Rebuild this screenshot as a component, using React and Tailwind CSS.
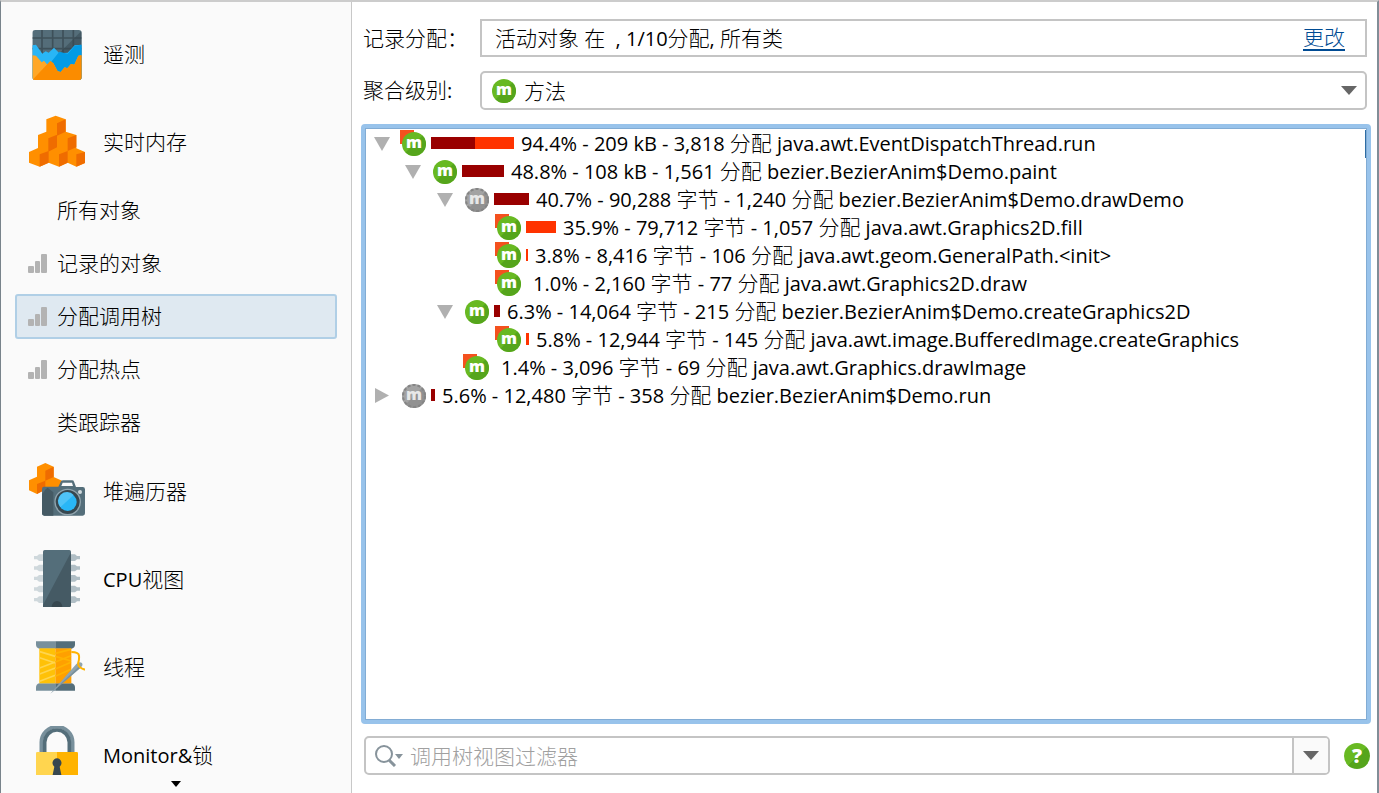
import React, { useState } from "react";

// Wraps runs of Chinese characters so that they get their own size and weight.
const Mixed = ({ children }) =>
  children
    .split(/([\u3000-\u9fff\uff00-\uffef]+)/)
    .filter(Boolean)
    .map((part, i) =>
      /[\u3000-\u9fff\uff00-\uffef]/.test(part) ? (
        <span key={i} className="text-[21px] font-light">
          {part}
        </span>
      ) : (
        part
      )
    );

const TelemetryIcon = () => (
  <svg viewBox="87 75 168 174" className="w-14 shrink-0" aria-hidden="true">
    <clipPath id="telemetry">
      <rect x="97" y="90" width="148" height="150" rx="9" />
    </clipPath>
    <g clipPath="url(#telemetry)">
      <rect x="97" y="90" width="148" height="150" fill="#546e7a" />
      <path d="M245 92L130 207V240H245Z" fill="#455a64" />
      <path
        d="M126 90V175M158 90V175M189 90V175M220 90V175M97 114H245M97 146H245"
        stroke="#37474f"
        strokeWidth="5"
        opacity=".75"
      />
      <path
        d="M97 136L108 134L127 161L137 154L146 158L162 143L178 160L203 158L224 136L245 134V240H97Z"
        fill="#29b6f6"
      />
      <path d="M178 155L203 161L224 137L245 134V240H110Z" fill="#039be5" />
      <path
        d="M97 166L108 167L125 187L132 182L142 194L151 183L160 190L173 214L182 216L194 202L202 205L213 192L223 194L235 167L245 166V240H97Z"
        fill="#ffa726"
      />
      <path
        d="M151 183L160 190L173 214L182 216L194 202L202 205L213 192L223 194L235 167L245 166V240H97L102 235Z"
        fill="#fb8c00"
      />
    </g>
  </svg>
);

const MemoryIcon = () => (
  <svg viewBox="87 339 168 174" className="w-14 shrink-0" aria-hidden="true">
    <path
      d="M139 358L167 347L197 358V395L229 405V445L255 456V489L229 500L203 488L177 500L146 488L119 500L87 488V456L114 444V405L139 395Z"
      fill="#ff8f00"
    />
    <path
      d="M171 370L197 358V395L171 407ZM145 415L171 404V442L145 455ZM203 415L229 405V442L203 453ZM119 463L146 453V488L119 500ZM177 463L203 453V488L177 500ZM229 463L255 456V489L229 500Z"
      fill="#ef6c00"
    />
  </svg>
);

const HeapIcon = () => (
  <svg viewBox="87 69 168 174" className="w-14 shrink-0" aria-hidden="true">
    <path
      d="M111 83L136 72L161 83V114L186 125V145L136 150L111 165L87 154V124L111 113Z"
      fill="#ff8f00"
    />
    <path
      d="M136 95L161 83V114L136 125ZM111 135L136 125V152L111 165Z"
      fill="#ef6c00"
    />
    <path
      d="M132 143H175L183 127Q185 124 190 124H216Q221 124 222 128L228 144H248Q255 144 255 151V223Q255 230 248 230H133Q126 230 126 223V150Q126 143 132 143Z"
      fill="#546e7a"
    />
    <path
      d="M132 158Q135 150 143 146L160 160V230H133Q126 230 126 223V165Z"
      fill="#455a64"
    />
    <path d="M188 131H216L219 141H184Z" fill="#fafafa" />
    <circle cx="203" cy="189" r="38" fill="#37474f" />
    <circle
      cx="203"
      cy="189"
      r="38"
      fill="none"
      stroke="#90a4ae"
      strokeWidth="4"
    />
    <circle cx="203" cy="189" r="27" fill="#29b6f6" />
    <path d="M181 205A27 27 0 0 1 221 168Z" fill="#4fc3f7" />
    <circle cx="240" cy="159" r="6" fill="#cfd8dc" />
  </svg>
);

const CpuIcon = () => (
  <svg viewBox="87 333 168 174" className="w-14 shrink-0" aria-hidden="true">
    {[356, 387, 418, 450, 482].map((y) => (
      <g key={y}>
        <path
          d={`M102 ${y - 5}H111L117 ${y - 10}H130V${y + 10}H117L111 ${y + 5}H102Z`}
          fill="#cfd8dc"
        />
        <path
          d={`M240 ${y - 5}H231L225 ${y - 10}H212V${y + 10}H225L231 ${y + 5}H240Z`}
          fill="#b0bec5"
        />
      </g>
    ))}
    <rect x="129" y="333" width="84" height="171" rx="5" fill="#546e7a" />
    <path d="M213 340V499Q213 504 208 504H129V498Z" fill="#455a64" />
    <path d="M155 504A16 18 0 0 1 187 504Z" fill="#37474f" />
  </svg>
);

const ThreadIcon = () => (
  <svg viewBox="87 57 168 174" className="w-14 shrink-0" aria-hidden="true">
    <path d="M108 67H166V89H118Q108 87 108 76Z" fill="#78909c" />
    <path d="M166 67H225V76Q225 87 215 89H166Z" fill="#546e7a" />
    <path d="M108 215H166V193H118Q108 195 108 206Z" fill="#78909c" />
    <path d="M166 215H225V206Q225 195 215 193H166Z" fill="#546e7a" />
    <rect x="118" y="88" width="48" height="105" fill="#ffc107" />
    <rect x="166" y="88" width="48" height="105" fill="#ffa000" />
    <path
      d="M119 98L166 112M119 116L166 132M119 147L166 129M119 165L166 147M119 187L166 169"
      stroke="#ffd54f"
      strokeWidth="5"
    />
    <path
      d="M166 103L213 91M166 112L213 126M166 129L213 110M166 150L213 130M166 172L213 151"
      stroke="#ffb300"
      strokeWidth="5"
    />
    <path d="M151 224L229 135Q238 126 246 132Q251 139 240 148Z" fill="#90a4ae" />
    <path d="M151 224L238 141L244 144Z" fill="#78909c" />
    <path
      d="M214 99Q236 99 237 110Q238 122 235 130Q231 145 255 152"
      fill="none"
      stroke="#ffb300"
      strokeWidth="6"
    />
  </svg>
);

const LockIcon = () => (
  <svg viewBox="87 321 168 174" className="w-14 shrink-0" aria-hidden="true">
    <path
      d="M124 404V370A47 47 0 0 1 218 370V404"
      fill="none"
      stroke="#78909c"
      strokeWidth="11"
    />
    <path
      d="M134 404V370A37 37 0 0 1 208 370V404"
      fill="none"
      stroke="#546e7a"
      strokeWidth="11"
    />
    <path d="M112 399H171V492H108V403Q108 399 112 399Z" fill="#ffd54f" />
    <path d="M171 399H230Q234 399 234 403V492H171Z" fill="#ffb300" />
    <path
      d="M171 418A14 14 0 0 1 179 443L185 472H157L163 443A14 14 0 0 1 171 418Z"
      fill="#37474f"
    />
  </svg>
);

const SignalIcon = () => (
  <svg
    viewBox="0 0 19 19"
    className="w-[19px] shrink-0"
    fill="#b3b3b3"
    aria-hidden="true"
  >
    <rect x="0" y="12" width="6" height="7" rx="1" />
    <rect x="7" y="7" width="5" height="12" rx="1" />
    <rect x="13" y="0" width="6" height="19" rx="1" />
  </svg>
);

const MethodIcon = ({ gray = false, hot = false }) => {
  const [top, bottom] = gray ? ["#a3a3a3", "#919191"] : ["#68b922", "#55a51c"];
  return (
    <svg viewBox="0 0 26 26" className="w-[26px] shrink-0" aria-hidden="true">
      {hot && <rect width="14" height="14" fill="#f4511e" />}
      <circle cx="14" cy="14" r="12" fill={top} />
      <path d="M22.5 5.5A12 12 0 0 1 5.5 22.5Z" fill={bottom} />
      {gray && (
        <circle
          cx="14"
          cy="14"
          r="11"
          fill="none"
          stroke="#858585"
          strokeWidth="2"
          strokeDasharray="3 2"
        />
      )}
      <text
        x="14"
        y="18"
        textAnchor="middle"
        fontFamily="Open Sans, sans-serif"
        fontWeight="800"
        fontSize="16"
        fill={gray ? "#e8e8e8" : "#ffffff"}
      >
        m
      </text>
    </svg>
  );
};

const SearchIcon = () => (
  <svg
    viewBox="0 0 28 22"
    className="w-7 shrink-0"
    fill="none"
    aria-hidden="true"
  >
    <circle cx="9" cy="9" r="8" stroke="#87939b" strokeWidth="2" />
    <path d="M14 15L20 21" stroke="#87939b" strokeWidth="3" />
    <path d="M20 9H28L24 14Z" fill="#87939b" />
  </svg>
);

const DownArrow = () => (
  <svg viewBox="0 0 16 9" className="w-4" fill="#666666" aria-hidden="true">
    <path d="M0 0H16L8 9Z" />
  </svg>
);

const telemetryItems = [
  { label: "遥测", icon: TelemetryIcon },
  { label: "实时内存", icon: MemoryIcon },
];

const memoryViews = [
  { label: "所有对象" },
  { label: "记录的对象", signal: true },
  { label: "分配调用树", signal: true },
  { label: "分配热点", signal: true },
  { label: "类跟踪器" },
];

const otherItems = [
  { label: "堆遍历器", icon: HeapIcon },
  { label: "CPU视图", icon: CpuIcon },
  { label: "线程", icon: ThreadIcon },
  { label: "Monitor&锁", icon: LockIcon },
];

// own = allocations of the node itself (bright), inherited = of its children (dark)
const rows = [
  { level: 0, open: true, hot: true, inherited: 44, own: 39, text: "94.4% - 209 kB - 3,818 分配 java.awt.EventDispatchThread.run" },
  { level: 1, open: true, inherited: 42, text: "48.8% - 108 kB - 1,561 分配 bezier.BezierAnim$Demo.paint" },
  { level: 2, open: true, gray: true, inherited: 35, text: "40.7% - 90,288 字节 - 1,240 分配 bezier.BezierAnim$Demo.drawDemo" },
  { level: 3, hot: true, own: 30, text: "35.9% - 79,712 字节 - 1,057 分配 java.awt.Graphics2D.fill" },
  { level: 3, hot: true, own: 2, text: "3.8% - 8,416 字节 - 106 分配 java.awt.geom.GeneralPath.<init>" },
  { level: 3, hot: true, text: "1.0% - 2,160 字节 - 77 分配 java.awt.Graphics2D.draw" },
  { level: 2, open: true, inherited: 6, text: "6.3% - 14,064 字节 - 215 分配 bezier.BezierAnim$Demo.createGraphics2D" },
  { level: 3, hot: true, own: 3, text: "5.8% - 12,944 字节 - 145 分配 java.awt.image.BufferedImage.createGraphics" },
  { level: 2, hot: true, text: "1.4% - 3,096 字节 - 69 分配 java.awt.Graphics.drawImage" },
  { level: 0, open: false, gray: true, inherited: 4, text: "5.6% - 12,480 字节 - 358 分配 bezier.BezierAnim$Demo.run" },
];

const NavItem = ({ label, icon: Icon }) => (
  <button
    type="button"
    className="flex h-[88px] w-full shrink-0 items-center gap-[18px] pl-7 text-left"
  >
    <Icon />
    <span>
      <Mixed>{label}</Mixed>
    </span>
  </button>
);

const SubItem = ({ label, signal, selected, onClick }) => (
  <button
    type="button"
    onClick={onClick}
    className={`flex h-[45px] shrink-0 items-center gap-2 rounded-[3px] border-2 pl-[11px] text-left ${
      selected ? "border-[#b0cfe6] bg-[#dfe9f1]" : "border-transparent"
    }`}
  >
    <span className="w-[21px]">{signal && <SignalIcon />}</span>
    <span>
      <Mixed>{label}</Mixed>
    </span>
  </button>
);

const TreeRow = ({ level, open, hot, gray, inherited = 0, own = 0, text }) => (
  <li
    className="flex h-7 items-center whitespace-nowrap"
    style={{ paddingLeft: 8 + Math.floor(level * 31.7) }}
  >
    <span className="w-[26px] shrink-0">
      {open !== undefined && (
        <button
          type="button"
          aria-label={open ? "折叠" : "展开"}
          className="block"
        >
          <svg viewBox="0 0 16 16" className="w-4" fill="#b0b0b0">
            <path d={open ? "M0 2H16L8 16Z" : "M1 1V16L15 8.5Z"} />
          </svg>
        </button>
      )}
    </span>
    <MethodIcon gray={gray} hot={hot} />
    <span className="mr-[7px] ml-[5px] flex h-3 shrink-0">
      <span className="bg-[#990000]" style={{ width: inherited }} />
      <span className="bg-[#ff3300]" style={{ width: own }} />
    </span>
    <span>
      <Mixed>{text}</Mixed>
    </span>
  </li>
);

const App = () => {
  const [view, setView] = useState("分配调用树");
  const [filter, setFilter] = useState("");

  return (
    <div className="flex h-screen border-t-2 border-r-2 border-l border-t-[#cccccc] border-r-[#818d97] border-l-[#78838b] bg-white font-['Open_Sans','Noto_Sans_CJK_SC',sans-serif] text-[20px] leading-7 text-black">
      {/* Sidebar */}
      <aside className="flex w-[351px] shrink-0 flex-col border-r border-[#c8c8c8] bg-[#fafafa]">
        <nav className="flex min-h-0 flex-1 flex-col overflow-hidden pt-2">
          {telemetryItems.map((item) => (
            <NavItem key={item.label} {...item} />
          ))}
          <div className="flex shrink-0 flex-col gap-2 px-[14px] pt-[2px] pb-[2px]">
            {memoryViews.map((item) => (
              <SubItem
                key={item.label}
                {...item}
                selected={item.label === view}
                onClick={() => setView(item.label)}
              />
            ))}
          </div>
          {otherItems.map((item) => (
            <NavItem key={item.label} {...item} />
          ))}
        </nav>
        <button
          type="button"
          aria-label="向下滚动"
          className="flex h-[18px] shrink-0 items-center justify-center"
        >
          <svg viewBox="0 0 10 6" className="w-[10px]">
            <path d="M0 0H10L5 6Z" />
          </svg>
        </button>
      </aside>

      {/* Call tree view */}
      <main className="flex min-w-0 flex-1 flex-col pt-[17px] pr-[6px] pb-[18px] pl-[9px]">
        <div className="mr-1 ml-[2px] flex items-center">
          <span className="w-[117px] shrink-0">
            <Mixed>记录分配：</Mixed>
          </span>
          <div className="flex h-[38px] flex-1 items-center justify-between border-2 border-[#c4c4c4] pr-5 pl-[13px]">
            <span className="whitespace-pre">
              <Mixed>{"活动对象 在  , 1/10分配, 所有类"}</Mixed>
            </span>
            <a
              href="#change"
              className="border-b-2 border-[#004b93] leading-[23px] text-[#004b93]"
            >
              <Mixed>更改</Mixed>
            </a>
          </div>
        </div>

        <div className="mt-[14px] mr-1 ml-[2px] flex items-center">
          <label htmlFor="level" className="w-[117px] shrink-0">
            <Mixed>聚合级别:</Mixed>
          </label>
          <div className="relative flex-1">
            <select
              id="level"
              className="block h-[39px] w-full appearance-none rounded-[5px] border-2 border-[#c4c4c4] bg-white pl-[42px] text-[21px] leading-7 font-light"
            >
              <option>方法</option>
            </select>
            <span className="pointer-events-none absolute inset-y-0 left-[10px] flex items-center pb-[2px]">
              <MethodIcon />
            </span>
            <span className="pointer-events-none absolute inset-y-0 right-[10px] flex items-center">
              <DownArrow />
            </span>
          </div>
        </div>

        <div className="relative mt-[14px] min-h-0 flex-1 rounded-[4px] border-4 border-[#98c3eb]">
          <ul className="h-full overflow-hidden border border-[#82acd4]">
            {rows.map((row) => (
              <TreeRow key={row.text} {...row} />
            ))}
          </ul>
          {/* Selection marker of the first row */}
          <span className="absolute top-[2px] right-px h-7 w-px bg-[#2e6da4]" />
        </div>

        <div className="mt-3 mr-px ml-[3px] flex items-center gap-[14px]">
          <div className="flex h-[39px] flex-1 rounded-[5px] border-2 border-[#c4c4c4]">
            <label htmlFor="filter" className="flex items-center pr-[7px] pl-[9px]">
              <SearchIcon />
            </label>
            <input
              id="filter"
              value={filter}
              onChange={(e) => setFilter(e.target.value)}
              placeholder="调用树视图过滤器"
              className="min-w-0 flex-1 text-[21px] leading-7 font-light outline-none placeholder:text-[#a0a0a0]"
            />
            <button
              type="button"
              aria-label="过滤选项"
              className="flex w-[36px] items-center justify-center rounded-r-[3px] border-l-2 border-[#c4c4c4] bg-[#fafafa]"
            >
              <DownArrow />
            </button>
          </div>
          <button
            type="button"
            aria-label="帮助"
            className="flex size-[26px] items-center justify-center rounded-full bg-linear-135 from-[#68b922] from-50% to-[#55a51c] to-50% text-[20px] leading-[26px] font-extrabold text-white"
          >
            ?
          </button>
        </div>
      </main>
    </div>
  );
};

export default App;
